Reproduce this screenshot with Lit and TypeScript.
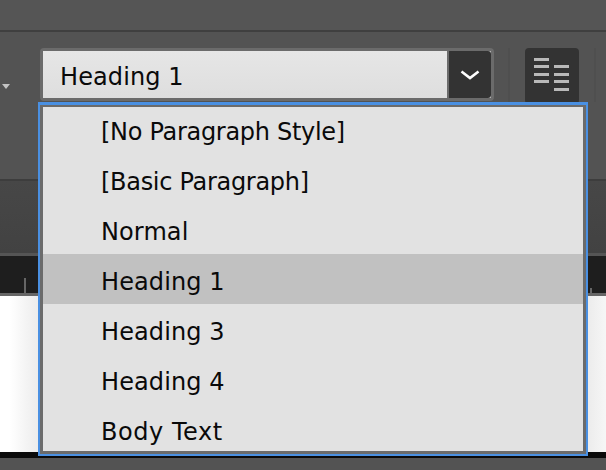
import { LitElement, html, css } from "lit";
import { customElement } from "lit/decorators.js";

const ITEMS = [
  { label: "[No Paragraph Style]", track: -0.3 },
  { label: "[Basic Paragraph]", track: -0.3 },
  { label: "Normal", track: 0.1 },
  { label: "Heading 1", track: 0.1 },
  { label: "Heading 3", track: 0.1 },
  { label: "Heading 4", track: 0.1 },
  { label: "Body Text", track: 0.55 },
];

@customElement("app-root")
export class AppRoot extends LitElement {
  static styles = css`
    :host { display: block; width: 606px; height: 470px; overflow: hidden; position: relative; background: #535353; font-family: "DejaVu Sans", sans-serif; color: #0a0a0a; }
    .top { height: 30px; background: #555; border-bottom: 2px solid #3f3f3f; }
    .toolbar { height: 149px; background: #535353; padding-top: 16px; box-sizing: border-box; display: flex; align-items: flex-start; border-bottom: 2px solid #3d3d3d; }
    .tri { width: 0; height: 0; border-left: 4px solid transparent; border-right: 4px solid transparent; border-top: 5px solid #c4c4c4; margin: 36px 0 0 2px; }
    .select { margin-left: 30px; width: 454px; height: 53px; box-sizing: border-box; border: 3px solid #6b6b6b; border-radius: 4px; display: flex; background: #e2e2e2; }
    .value { flex: 1; padding-left: 17px; font-size: 24px; line-height: 53px; height: 47px; letter-spacing: 0.1px; background: linear-gradient(#e6e6e6, #dedede); border-right: 2px solid #6b6b6b; }
    .btn { width: 42px; background: #333; display: flex; align-items: center; justify-content: center; border-radius: 0 3px 3px 0; }
    .sep { width: 2px; height: 54px; background: #4f4f4f; }
    .sep.a { margin-left: 14px; }
    .sep.b { margin-left: 15px; }
    .toggle { margin-left: 15px; width: 54px; height: 56px; border-radius: 4px; background: #333; }
    .toggle svg, .btn svg { display: block; }
    .panel { height: 72px; background: linear-gradient(#474747, #424242); border-bottom: 3px solid #555; }
    .ruler { height: 37px; background: #1e1e1e; position: relative; }
    .tick { position: absolute; left: 24px; bottom: 0; width: 2px; height: 15px; background: #666; }
    .tick.b { left: 590px; height: 5px; }
    .page { height: 156px; border-top: 3px solid #666; background: linear-gradient(90deg, #fff 10px, #ececec 38px, #ececec 588px, #f6f6f6 606px); }
    .foot { height: 6px; background: #0a0a0a; }
    .popup { position: absolute; left: 38px; top: 102px; width: 550px; height: 354px; box-sizing: border-box; border: 2px solid #4a90e2; border-top-width: 3px; background: #e2e2e2; }
    .inner { height: 100%; box-sizing: border-box; border: 3px solid #6b6b6b; border-top-width: 2px; overflow: hidden; }
    .item { height: 50px; box-sizing: border-box; padding: 3px 0 0 58px; line-height: 50px; font-size: 24px; }
    .item:first-child { height: 47px; padding-top: 0; }
    .item.sel { background: #c1c1c1; }
  `;
  render() {
    return html`
      <div class="top"></div>
      <div class="toolbar">
        <div class="tri"></div>
        <div class="select">
          <div class="value">Heading 1</div>
          <div class="btn"><svg width="20" height="14" viewBox="0 0 20 14"><path d="M1.5 3.5l8.5 6.5 8.5-6.5" fill="none" stroke="#fff" stroke-width="2.6"/></svg></div>
        </div>
        <div class="sep a"></div>
        <div class="toggle">
          <svg width="54" height="56" viewBox="0 0 54 56" fill="#b9b9b9">
            <rect x="9" y="10" width="15" height="3"/><rect x="9" y="17" width="15" height="3"/><rect x="9" y="25" width="15" height="3"/><rect x="9" y="32" width="15" height="3"/>
            <rect x="29" y="17" width="15" height="3"/><rect x="29" y="25" width="15" height="3"/><rect x="29" y="32" width="15" height="3"/><rect x="29" y="40" width="15" height="3"/>
          </svg>
        </div>
        <div class="sep b"></div>
      </div>
      <div class="panel"></div>
      <div class="ruler"><div class="tick"></div><div class="tick b"></div></div>
      <div class="page"></div>
      <div class="foot"></div>
      <div class="popup"><div class="inner">
        ${ITEMS.map((t) => html`<div class="item ${t.label === "Heading 1" ? "sel" : ""}" style="letter-spacing:${t.track}px">${t.label}</div>`)}
      </div></div>
    `;
  }
}
